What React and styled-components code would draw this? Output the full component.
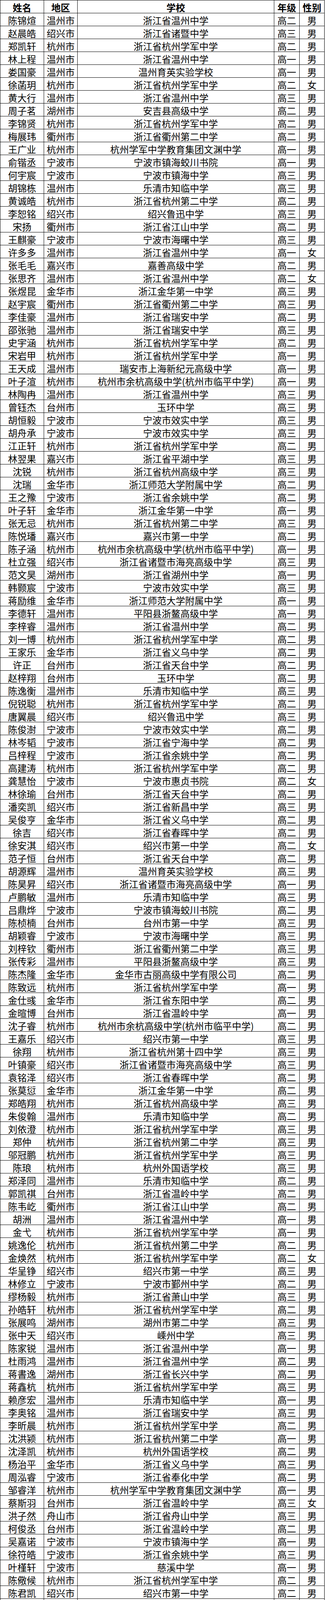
import styled, { createGlobalStyle } from "styled-components"

const GlobalStyle = createGlobalStyle`
  html, body {
    margin: 0;
    padding: 0;
    background: #fff;
  }
  * {
    box-sizing: border-box;
  }
`

// 姓名 地区 学校 年级 性别
const RAW = `
陈锦煊 温州市 浙江省温州中学 高二 男
赵晨皓 绍兴市 浙江省诸暨中学 高三 男
郑凯轩 杭州市 浙江省杭州学军中学 高二 男
林上程 温州市 浙江省温州中学 高一 男
娄国豪 温州市 温州育英实验学校 高一 男
徐菡玥 杭州市 浙江省杭州学军中学 高二 女
黄大行 温州市 浙江省温州中学 高三 男
周子茗 湖州市 安吉县高级中学 高二 男
李锦贤 杭州市 浙江省杭州学军中学 高二 男
梅展玮 衢州市 浙江省衢州第二中学 高二 男
王广业 杭州市 杭州学军中学教育集团文渊中学 高一 男
俞锴丞 宁波市 宁波市镇海蛟川书院 高一 男
何宇宸 宁波市 宁波市镇海中学 高三 男
胡锦栋 温州市 乐清市知临中学 高三 男
黄诚皓 杭州市 浙江省杭州第二中学 高二 男
李恕铭 绍兴市 绍兴鲁迅中学 高三 男
宋扬 衢州市 浙江省江山中学 高二 男
王麒豪 宁波市 宁波市海曙中学 高三 男
许多多 温州市 浙江省温州中学 高一 女
张毛毛 嘉兴市 嘉善高级中学 高二 男
张思齐 温州市 浙江省温州中学 高二 女
张煜昆 金华市 浙江金华第一中学 高三 男
赵宇宸 衢州市 浙江省衢州第二中学 高三 男
李佳豪 温州市 浙江省瑞安中学 高二 男
邵张驰 温州市 浙江省瑞安中学 高三 男
史宇涵 杭州市 浙江省杭州学军中学 高二 男
宋岩甲 杭州市 浙江省杭州学军中学 高一 男
王天成 温州市 瑞安市上海新纪元高级中学 高一 男
叶子渲 杭州市 杭州市余杭高级中学(杭州市临平中学) 高一 男
林陶冉 温州市 浙江省温州中学 高三 男
曾钰杰 台州市 玉环中学 高三 男
胡恒毅 宁波市 宁波市效实中学 高三 男
胡舟承 宁波市 宁波市效实中学 高三 男
江正轩 杭州市 浙江省杭州学军中学 高二 男
林翌果 嘉兴市 浙江省平湖中学 高三 男
沈锐 杭州市 浙江省杭州高级中学 高三 男
沈瑞 金华市 浙江师范大学附属中学 高二 男
王之豫 宁波市 浙江省余姚中学 高二 男
叶子轩 金华市 浙江金华第一中学 高一 男
张无忌 杭州市 浙江省杭州第二中学 高三 男
陈悦璠 嘉兴市 嘉兴市第一中学 高二 男
陈子涵 杭州市 杭州市余杭高级中学(杭州市临平中学) 高一 男
杜立强 绍兴市 浙江省诸暨市海亮高级中学 高三 男
范文昊 湖州市 浙江省湖州中学 高一 男
韩颢宸 宁波市 宁波市效实中学 高三 男
蒋励维 金华市 浙江师范大学附属中学 高一 男
李德轩 温州市 平阳县浙鳌高级中学 高一 男
李梓睿 温州市 浙江省温州中学 高二 男
刘一博 杭州市 浙江省杭州学军中学 高二 男
王家乐 金华市 浙江省义乌中学 高二 男
许正 台州市 浙江省天台中学 高二 男
赵梓翔 台州市 玉环中学 高二 男
陈逸衡 温州市 乐清市知临中学 高三 男
倪锐聪 杭州市 浙江省杭州学军中学 高二 男
唐翼晨 绍兴市 绍兴鲁迅中学 高三 男
陈俊澍 宁波市 宁波市效实中学 高二 男
林岑韬 宁波市 浙江省宁海中学 高二 男
吕梓程 宁波市 浙江省余姚中学 高二 男
高建涛 杭州市 浙江省杭州学军中学 高二 男
龚慧怡 宁波市 宁波市惠贞书院 高二 女
林徐瑜 台州市 浙江省天台中学 高二 男
潘奕凯 绍兴市 浙江省新昌中学 高三 男
吴俊亨 金华市 浙江省义乌中学 高二 男
徐吉 绍兴市 浙江省春晖中学 高二 男
徐安淇 绍兴市 绍兴市第一中学 高二 女
范子恒 台州市 浙江省天台中学 高二 男
胡源辉 温州市 温州育英实验学校 高三 男
陈昊昇 绍兴市 浙江省诸暨市海亮高级中学 高一 男
卢鹏敏 温州市 乐清市知临中学 高三 男
吕鼎烨 宁波市 宁波市镇海蛟川书院 高二 男
陈桢楠 台州市 台州市第一中学 高三 男
胡颖睿 宁波市 宁波市海曙中学 高三 男
刘梓钦 衢州市 浙江省衢州第二中学 高三 男
张传彩 温州市 平阳县浙鳌高级中学 高三 男
陈杰隆 金华市 金华市古丽高级中学有限公司 高二 男
陈致远 杭州市 浙江省杭州学军中学 高一 男
金仕彧 金华市 浙江省东阳中学 高二 男
金暄博 台州市 浙江省温岭中学 高一 男
沈子睿 杭州市 杭州市余杭高级中学(杭州市临平中学) 高二 男
王嘉乐 绍兴市 绍兴市第一中学 高三 男
徐翔 杭州市 浙江省杭州第十四中学 高三 男
叶镇豪 绍兴市 浙江省诸暨市海亮高级中学 高三 男
袁铭泽 绍兴市 浙江省春晖中学 高二 男
张莫愆 金华市 浙江金华第一中学 高二 男
郑皓翔 杭州市 浙江省杭州高级中学 高三 男
朱俊翰 温州市 乐清市知临中学 高二 男
刘依澄 杭州市 浙江省杭州学军中学 高三 男
郑仲 杭州市 浙江省杭州第二中学 高三 男
邬冠鹏 杭州市 浙江省杭州学军中学 高三 男
陈琅 杭州市 杭州外国语学校 高三 男
郑泽同 温州市 乐清市知临中学 高二 男
郭凯祺 台州市 浙江省温岭中学 高二 男
陈韦屹 衢州市 浙江省江山中学 高二 男
胡洲 温州市 浙江省温州中学 高一 男
金弋 杭州市 浙江省杭州学军中学 高一 男
姚逸伦 杭州市 浙江省杭州第二中学 高二 男
金焕然 杭州市 浙江省杭州学军中学 高二 女
华呈铮 绍兴市 绍兴市第一中学 高三 男
林修立 宁波市 宁波市鄞州中学 高二 男
缪杨毅 杭州市 浙江省萧山中学 高三 男
孙皓轩 杭州市 浙江省杭州学军中学 高二 男
张展鸣 湖州市 湖州市第二中学 高三 男
张中天 绍兴市 嵊州中学 高三 男
陈家锐 温州市 浙江省温州中学 高一 男
杜雨鸿 温州市 浙江省温州中学 高二 男
蒋書逸 湖州市 浙江省长兴中学 高二 男
蒋鑫杭 杭州市 浙江省杭州学军中学 高三 男
赖彦宏 温州市 乐清市知临中学 高一 男
李奥铭 温州市 浙江省瑞安中学 高三 男
李昕晨 杭州市 浙江省杭州学军中学 高二 男
沈洪颍 杭州市 浙江省杭州第二中学 高一 男
沈泽凯 杭州市 杭州外国语学校 高二 男
杨治平 金华市 浙江省义乌中学 高三 男
周泓睿 宁波市 浙江省奉化中学 高二 男
邹睿洋 杭州市 杭州学军中学教育集团文渊中学 高一 男
蔡斯羽 台州市 浙江省温岭中学 高三 女
洪子然 舟山市 浙江省舟山中学 高三 男
柯俊丞 台州市 浙江省温岭中学 高二 男
吴嘉诺 宁波市 宁波市镇海中学 高一 男
徐符皓 宁波市 浙江省余姚中学 高三 男
叶槿轩 宁波市 慈溪中学 高一 男
陈儆候 杭州市 浙江省杭州学军中学 高二 男
陈君凯 绍兴市 绍兴市第一中学 高二 男
陈子涵 宁波市 宁波市镇海蛟川书院 高一 男
何昊泽 杭州市 浙江省杭州学军中学 高二 男
胡徐懿 杭州市 杭州市余杭高级中学(杭州市临平中学) 高一 男
胡耀 杭州市 浙江省杭州学军中学 高二 男
李雨泽 宁波市 宁波市鄞州中学 高二 男
孙人则 绍兴市 绍兴鲁迅中学 高一 男
王一哲 杭州市 浙江省杭州第十四中学 高三 男
王作豪 杭州市 浙江省富阳中学 高二 男
徐子尧 杭州市 浙江省杭州第二中学 高二 男
叶凯瑞 杭州市 浙江省杭州高级中学 高三 男
张卓轩 杭州市 浙江省杭州第二中学 高一 男
章闵博 温州市 温州育英实验学校 高一 男
周祺 绍兴市 绍兴市第一中学 高一 男
何秉宸 台州市 浙江省台州中学 高二 男
满乙霆 温州市 乐清市知临中学 高三 男
庄熠晨 宁波市 宁波市镇海中学 高三 男
蔡瑞志 温州市 瑞安市上海新纪元高级中学 高一 男
成铠竞 温州市 浙江省温州中学 高三 男
江海天 宁波市 宁波市镇海蛟川书院 高一 男
林奥翔 温州市 浙江省乐清中学 高三 男
林明亮 杭州市 杭州学军中学教育集团文渊中学 高一 男
刘心冕 杭州市 杭州学军中学教育集团文渊中学 高一 女
卢嘉城 台州市 台州市第一中学 高三 男
温璧诚 温州市 浙江省温州中学 高一 男
吴名锋 宁波市 浙江省宁海中学 高二 男
王浩宇 杭州市 浙江省杭州第二中学 高三 男
胡铭轩 宁波市 宁波市镇海蛟川书院 高三 男
高鑫 湖州市 浙江省湖州中学 高二 男
王孜雨 嘉兴市 嘉兴市第一中学 高三 男
徐振轩 杭州市 浙江省杭州学军中学 高三 男
李晨旗 温州市 浙江省温州中学 高三 女
章宸恺 湖州市 安吉县高级中学 高三 男
韩彭 嘉兴市 浙江省桐乡第一中学 高三 男
朴宇祺 湖州市 德清县华盛达外语学校 高二 男
杨联昊 杭州市 浙江省杭州第二中学 高二 男
陈骁 杭州市 浙江省杭州第二中学 高一 男
戴德淞 温州市 平阳县浙鳌高级中学 高二 男
范宸瑞 丽水市 浙江省丽水中学 高三 男
李艺 温州市 平阳县浙鳌高级中学 高二 男
`

const rows = RAW.trim().split("\n").map((line) => line.trim().split(" "))

const HEADERS = ["姓名", "地区", "学校", "年级", "性别"]

const Sheet = styled.div`
  display: grid;
  grid-template-columns: 112px 86px 504px 65px 64px;
  grid-auto-rows: 33px;
  width: 832px;
  border-top: 1px solid #000;
  border-left: 1px solid #000;
  font-family: "Noto Sans CJK SC", "Noto Sans", sans-serif;
  color: #000;
`

const Cell = styled.div`
  height: 33px;
  padding-top: 3px;
  display: flex;
  align-items: center;
  justify-content: center;
  border-right: 1px solid #000;
  border-bottom: 1px solid #000;
  font-size: 24px;
  line-height: 1;
  font-weight: ${(p) => (p.$head ? 700 : 400)};
  white-space: nowrap;
  overflow: hidden;
`

function App() {
  return (
    <>
      <GlobalStyle />
      <Sheet>
        {HEADERS.map((h) => (
          <Cell key={h} $head>
            {h}
          </Cell>
        ))}
        {rows.map((row, i) =>
          row.map((value, j) => <Cell key={`${i}-${j}`}>{value}</Cell>)
        )}
      </Sheet>
    </>
  )
}

export default App
